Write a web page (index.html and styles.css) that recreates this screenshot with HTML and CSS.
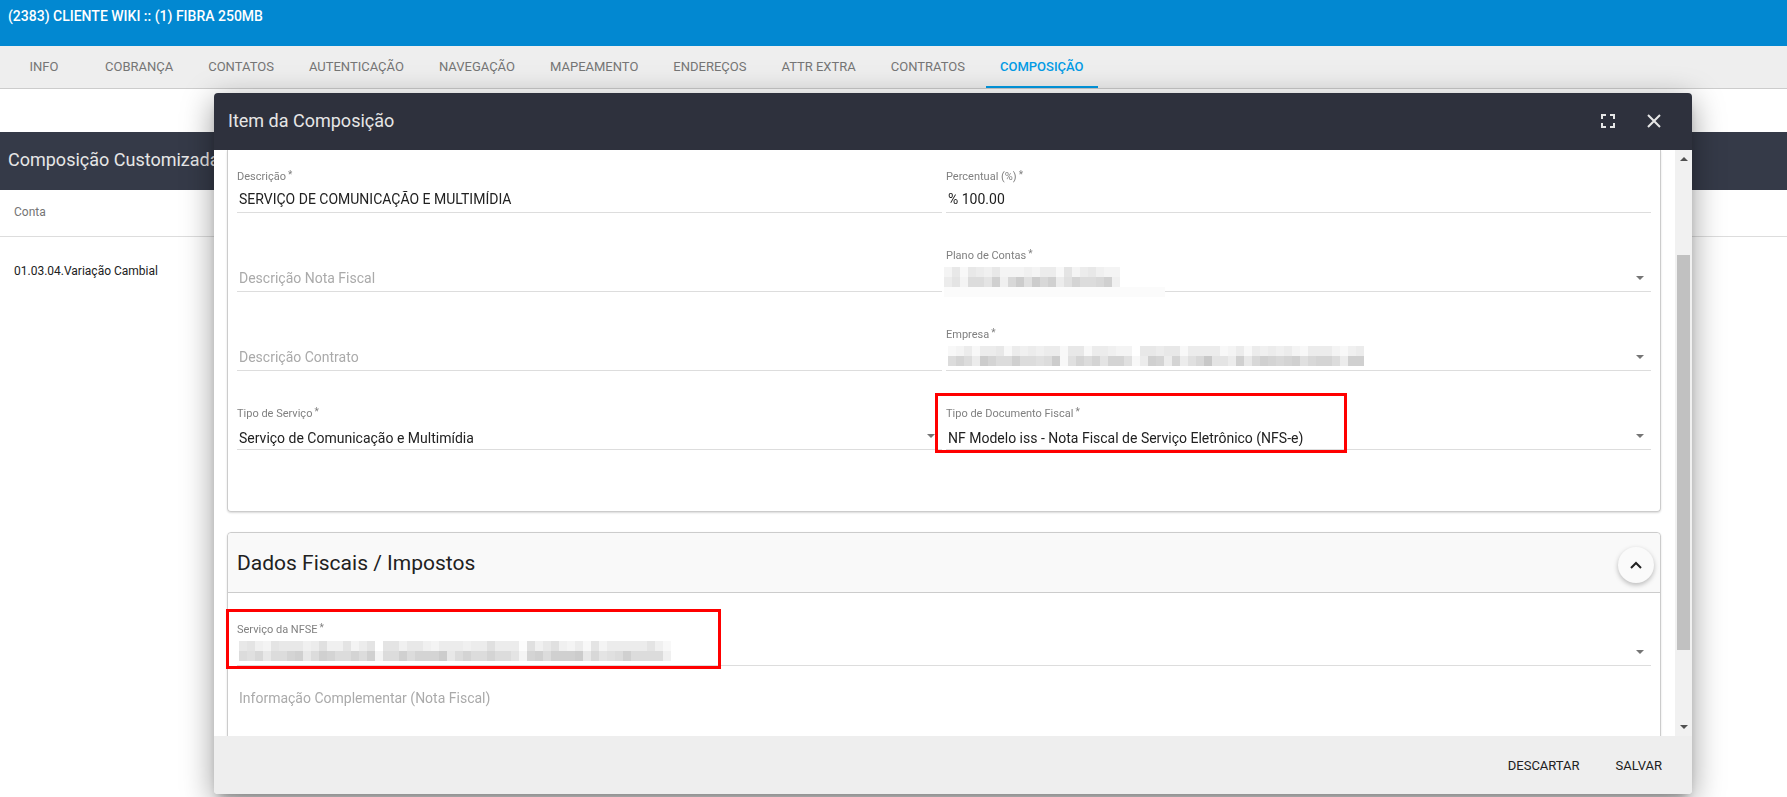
FILE: index.html
```html
<!DOCTYPE html>
<html lang="pt-BR">
<head>
  <meta charset="UTF-8">
  <meta name="viewport" content="width=device-width, initial-scale=1.0">
  <title>Item da Composição</title>
  <link rel="stylesheet" href="styles.css">
</head>
<body>
  <header class="topbar">(2383) CLIENTE WIKI :: (1) FIBRA 250MB</header>

  <nav class="tabs">
    <a class="tab" href="#info">INFO</a>
    <a class="tab" href="#cobranca">COBRANÇA</a>
    <a class="tab" href="#contatos">CONTATOS</a>
    <a class="tab" href="#autenticacao">AUTENTICAÇÃO</a>
    <a class="tab" href="#navegacao">NAVEGAÇÃO</a>
    <a class="tab" href="#mapeamento">MAPEAMENTO</a>
    <a class="tab" href="#enderecos">ENDEREÇOS</a>
    <a class="tab" href="#attr">ATTR EXTRA</a>
    <a class="tab" href="#contratos">CONTRATOS</a>
    <a class="tab active" href="#composicao">COMPOSIÇÃO</a>
  </nav>

  <main class="page">
    <h2 class="page-title">Composição Customizada</h2>
    <table class="grid">
      <thead>
        <tr><th>Conta</th></tr>
      </thead>
      <tbody>
        <tr><td>01.03.04.Variação Cambial</td></tr>
      </tbody>
    </table>
  </main>

  <div class="overlay">
    <div class="dialog" role="dialog" aria-labelledby="dialog-title">
      <div class="dialog-header">
        <h2 id="dialog-title">Item da Composição</h2>
        <button class="icon-button" type="button" aria-label="Tela cheia">
          <svg viewBox="0 0 24 24"><path d="M6 10V6h4M14 6h4v4M18 14v4h-4M10 18H6v-4"/></svg>
        </button>
        <button class="icon-button" type="button" aria-label="Fechar">
          <svg viewBox="0 0 24 24"><path d="M6 6l12 12M18 6L6 18"/></svg>
        </button>
      </div>

      <div class="dialog-body">
        <div class="content">
          <section class="card first">
            <div class="fields">
              <div class="field">
                <label class="required" for="descricao">Descrição</label>
                <input id="descricao" type="text" value="SERVIÇO DE COMUNICAÇÃO E MULTIMÍDIA">
              </div>
              <div class="field">
                <label class="required" for="percentual">Percentual (%)</label>
                <input id="percentual" type="text" value="% 100.00">
              </div>
              <div class="field">
                <label for="desc-nota"></label>
                <input id="desc-nota" type="text" placeholder="Descrição Nota Fiscal" aria-label="Descrição Nota Fiscal">
              </div>
              <div class="field">
                <label class="required" for="plano">Plano de Contas</label>
                <select id="plano"><option></option></select>
                <div class="mosaic smear" data-top="c9d9ab9cccbcaad8ca9bcc" data-bottom="a8c6683b527253a746653b"></div>
              </div>
              <div class="field">
                <label for="desc-contrato"></label>
                <input id="desc-contrato" type="text" placeholder="Descrição Contrato" aria-label="Descrição Contrato">
              </div>
              <div class="field">
                <label class="required" for="empresa">Empresa</label>
                <select id="empresa"><option></option></select>
                <div class="mosaic" data-top="dcadaa9dababaad99daabccf99a99daaaadcadababacdaaacdba" data-bottom="646a2466366762d74648447da34a4a75188a3953454375446a33"></div>
              </div>
              <div class="field">
                <label class="required" for="tipo-servico">Tipo de Serviço</label>
                <select id="tipo-servico"><option>Serviço de Comunicação e Multimídia</option></select>
              </div>
              <div class="field">
                <label class="required" for="tipo-doc">Tipo de Documento Fiscal</label>
                <select id="tipo-doc"><option>NF Modelo iss - Nota Fiscal de Serviço Eletrônico (NFS-e)</option></select>
                <div class="mark"></div>
              </div>
            </div>
          </section>

          <section class="card">
            <div class="card-header">
              <h3>Dados Fiscais / Impostos</h3>
              <button class="fab" type="button" aria-label="Recolher">
                <svg viewBox="0 0 24 24"><path d="M7 15l5-5 5 5"/></svg>
              </button>
            </div>
            <div class="fields single">
              <div class="field">
                <label class="required" for="servico">Serviço da NFSE</label>
                <select id="servico"><option></option></select>
                <div class="mosaic" data-top="98bc8999ba7bb8ca8f88b99bcaaabaa7aaae7b97bcad8caaaaa8bd" data-bottom="67596643963466463c66364442964664668c43633329587636666b"></div>
                <div class="mark wide"></div>
              </div>
              <div class="field">
                <textarea id="info-compl" rows="2" placeholder="Informação Complementar (Nota Fiscal)" aria-label="Informação Complementar (Nota Fiscal)"></textarea>
              </div>
            </div>
          </section>
        </div>

        <div class="scrollbar">
          <span class="arrow up"></span>
          <div class="track"><div class="thumb"></div></div>
          <span class="arrow down"></span>
        </div>
      </div>

      <div class="dialog-footer">
        <button type="button">DESCARTAR</button>
        <button type="button">SALVAR</button>
      </div>
    </div>
  </div>

  <script>
    // valores ocultos: cada dígito hex é o tom de cinza de um bloco
    document.querySelectorAll('.mosaic').forEach(function(mosaic) {
      [mosaic.dataset.top, mosaic.dataset.bottom].forEach(function(tones) {
        const row = document.createElement('div');
        row.className = 'mosaic-row';
        for (const tone of tones) {
          const cell = document.createElement('i');
          const gray = Math.min(255, 196 + parseInt(tone, 16) * 4);
          cell.style.background = `rgb(${gray}, ${gray}, ${gray})`;
          row.appendChild(cell);
        }
        mosaic.appendChild(row);
      });
    });
  </script>
</body>
</html>
```
FILE: styles.css
```css
* {
  margin: 0;
  padding: 0;
  box-sizing: border-box;
}

body {
  font-family: Roboto, sans-serif;
  font-size: 14px;
  color: #212121;
  background: #fff;
  height: 100vh;
  overflow: hidden;
}

button,
input,
select,
textarea {
  font: inherit;
  color: inherit;
  background: none;
  border: 0;
  outline: 0;
}

.topbar {
  height: 46px;
  padding: 8px;
  line-height: 16px;
  font-weight: 500;
  color: #fff;
  background: #0288d1;
}

.tabs {
  display: flex;
  gap: 7px;
  height: 43px;
  padding: 0 4px;
  background: #eee;
  border-bottom: 1px solid #ccc;
}

.tab {
  min-width: 80px;
  padding: 0 14px;
  line-height: 42px;
  font-size: 13px;
  text-align: center;
  text-decoration: none;
  color: #757575;
}

.tab.active {
  font-weight: 500;
  color: #039be5;
  border-bottom: 2px solid #039be5;
}

.page {
  padding-top: 43px;
}

.page-title {
  height: 58px;
  padding: 0 8px;
  line-height: 56px;
  font-size: 18px;
  font-weight: 400;
  color: #e6e6e6;
  background: #353a48;
}

.grid {
  width: 100%;
  border-collapse: collapse;
  font-size: 12px;
  text-align: left;
}

.grid th {
  height: 46px;
  padding: 0 14px 2px;
  font-weight: 400;
  color: #757575;
  border-bottom: 1px solid #ddd;
}

.grid td {
  height: 70px;
  padding: 0 14px;
}

.overlay {
  position: fixed;
  inset: 0;
  padding: 93px 95px 3px 214px;
}

.dialog {
  display: flex;
  flex-direction: column;
  height: 100%;
  background: #fff;
  border-radius: 4px;
  box-shadow: 0 8px 10px -5px rgba(0, 0, 0, 0.3), 0 8px 32px rgba(0, 0, 0, 0.4);
  overflow: hidden;
}

.dialog-header {
  display: flex;
  align-items: center;
  gap: 22px;
  height: 57px;
  flex: none;
  padding: 0 26px 2px 14px;
  color: #e6e6e6;
  background: #2e313d;
}

.dialog-header h2 {
  flex: 1;
  font-size: 18px;
  font-weight: 400;
}

.icon-button {
  width: 24px;
  height: 24px;
}

.icon-button svg {
  display: block;
  fill: none;
  stroke: #e6e6e6;
  stroke-width: 2;
}

.dialog-body {
  display: flex;
  flex: 1;
  min-height: 0;
}

.content {
  flex: 1;
  padding: 0 14px 0 13px;
  overflow: hidden;
}

.card {
  margin-bottom: 20px;
  border: 1px solid #ccc;
  border-radius: 4px;
  box-shadow: 0 1px 2px rgba(0, 0, 0, 0.15);
}

.card.first {
  border-top: 0;
  border-radius: 0 0 4px 4px;
}

.card-header {
  display: flex;
  align-items: center;
  justify-content: space-between;
  height: 60px;
  padding: 0 6px 0 9px;
  background: #f9f9f9;
  border-bottom: 1px solid #ccc;
  border-radius: 4px 4px 0 0;
}

.card-header h3 {
  font-size: 21px;
  font-weight: 400;
}

.fab {
  width: 36px;
  height: 36px;
  padding: 6px;
  margin-top: 4px;
  border-radius: 50%;
  background: #fafafa;
  box-shadow: 0 2px 5px rgba(0, 0, 0, 0.26);
}

.fab svg {
  display: block;
  fill: none;
  stroke: #212121;
  stroke-width: 2;
}

.fields {
  display: grid;
  grid-template-columns: 1fr 1fr;
  gap: 36px 4px;
  padding: 20px 9px 61px;
}

.fields.single {
  grid-template-columns: 1fr;
  gap: 16px;
  padding-top: 30px;
}

.field {
  position: relative;
  display: flex;
  flex-direction: column;
}

.field label {
  height: 14px;
  line-height: 14px;
  font-size: 11px;
  color: #808080;
}

.required::after {
  content: "*";
  margin-left: 2px;
  font-size: 10px;
  vertical-align: top;
  line-height: 10px;
}

.field input,
.field select,
.field textarea {
  width: 100%;
  height: 29px;
  padding: 3px 2px 1px;
  border-bottom: 1px solid #ddd;
}

.field select {
  appearance: none;
  padding: 6px 2px 0;
}

.field:has(select)::after {
  content: "";
  position: absolute;
  right: 7px;
  bottom: 12px;
  border: 4px solid transparent;
  border-top-color: #757575;
  border-bottom: 0;
}

.field textarea {
  height: 72px;
  padding-top: 8px;
  resize: none;
}

::placeholder {
  color: #aaa;
  opacity: 1;
}

.mosaic {
  position: absolute;
  top: 18px;
  left: 2px;
}

.mosaic-row {
  display: flex;
}

.mosaic-row i {
  width: 8px;
  height: 10px;
}

.mosaic.smear {
  left: -2px;
}

.mosaic.smear::after {
  content: "";
  display: block;
  width: 221px;
  height: 10px;
  background: #fbfbfb;
}

.mark {
  position: absolute;
  top: -14px;
  left: -11px;
  width: 412px;
  height: 60px;
  border: 3px solid #f00;
}

.mark.wide {
  width: 495px;
}

.scrollbar {
  display: flex;
  flex-direction: column;
  align-items: center;
  width: 17px;
  padding: 7px 2px;
  background: #f1f1f1;
}

.track {
  flex: 1;
  width: 13px;
  padding: 94px 0 75px;
}

.thumb {
  height: 100%;
  background: #c1c1c1;
}

.arrow {
  border: 4px solid transparent;
}

.arrow.up {
  border-top: 0;
  border-bottom-color: #505050;
}

.arrow.down {
  border-bottom: 0;
  border-top-color: #505050;
}

.dialog-footer {
  display: flex;
  flex: none;
  align-items: center;
  justify-content: flex-end;
  gap: 36px;
  height: 58px;
  padding: 0 30px;
  font-size: 13px;
  background: #eee;
}
```
